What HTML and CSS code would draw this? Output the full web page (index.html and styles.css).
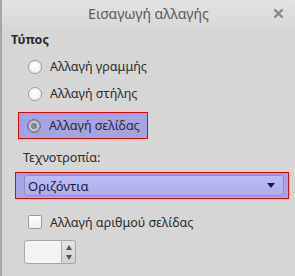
FILE: index.html
```html
<!DOCTYPE html>
<html>
<head>
<meta charset="utf-8">
<link rel="stylesheet" href="styles.css">
</head>
<body>
<div class="window">
  <div class="titlebar">
    <span></span>
    <span class="title">Εισαγωγή αλλαγής</span>
    <span class="close">
      <svg width="11" height="11" viewBox="0 0 11 11"><path d="M2 2 L9 9 M9 2 L2 9" stroke="#8a8a8a" stroke-width="2.4" stroke-linecap="round"/></svg>
    </span>
  </div>
  <div class="content">
    <div class="heading">Τύπος</div>
    <div class="options">
      <label class="row"><span class="radio"></span><span>Αλλαγή γραμμής</span></label>
      <label class="row"><span class="radio"></span><span>Αλλαγή στήλης</span></label>
      <label class="row selected"><span class="radio checked"></span><span>Αλλαγή σελίδας</span></label>
    </div>
    <div class="label">Τεχνοτροπία:</div>
    <div class="combo-frame">
      <div class="combo"><span>Οριζόντια</span><span class="arrow"></span></div>
    </div>
    <label class="row check-row"><span class="checkbox"></span><span>Αλλαγή αριθμού σελίδας</span></label>
    <div class="spin">
      <div class="spin-entry"></div>
      <div class="spin-buttons"><span class="up"></span><span class="down"></span></div>
    </div>
  </div>
</div>
</body>
</html>
```

FILE: styles.css
```css
html, body { margin: 0; padding: 0; }
body {
  font-family: "Noto Sans", "DejaVu Sans", sans-serif;
  font-size: 12.5px;
  color: #2c2c2c;
}
.window {
  width: 295px;
  height: 276px;
  box-sizing: border-box;
  background: #d6d6d6;
  border-left: 2px solid #a6a6a6;
  overflow: hidden;
}
.titlebar {
  height: 26px;
  display: grid;
  grid-template-columns: 1fr auto 1fr;
  align-items: center;
  background: linear-gradient(#e2e2e2, #d9d9d9);
}
.title {
  font-size: 14px;
  color: #5a5a5a;
  padding-top: 1px;
}
.close {
  justify-self: end;
  margin-right: 11px;
  display: flex;
}
.content {
  padding-left: 9px;
  display: flex;
  flex-direction: column;
}
.heading {
  font-weight: bold;
  margin-top: 5px;
  height: 18px;
  line-height: 18px;
}
.options {
  display: flex;
  flex-direction: column;
  margin-top: 4px;
}
.row {
  display: flex;
  align-items: center;
  gap: 8px;
  height: 27px;
  padding-left: 17px;
}
.row.selected {
  margin-left: 7px;
  padding-left: 8px;
  width: 120px;
  height: 25px;
  border: 1px solid #f00000;
  background: #a4a4e2;
  margin-top: 5px;
}
.radio {
  width: 12px;
  height: 12px;
  border: 1px solid #9c9c9c;
  border-radius: 50%;
  background: radial-gradient(circle at 50% 40%, #ffffff, #ececec);
  flex: none;
}
.radio.checked {
  border-color: #6a7480;
  background: radial-gradient(circle, #7d8894 0 3px, #c8ccd8 3.5px 4.5px, #9aa0b0 5px);
}
.label {
  margin-top: 10px;
  padding-left: 12px;
  height: 18px;
  line-height: 18px;
}
.combo-frame {
  margin-top: 5px;
  margin-left: 4px;
  width: 272px;
  height: 25px;
  border: 1px solid #f00000;
  background: #a6a6e6;
  box-sizing: content-box;
  display: flex;
  align-items: center;
}
.combo {
  margin-left: 8px;
  width: 260px;
  height: 21px;
  box-sizing: border-box;
  border: 1px solid #8f8fc6;
  border-radius: 3px;
  background: linear-gradient(#bcbcf4, #acacec);
  display: flex;
  align-items: center;
  justify-content: space-between;
  padding: 0 8px 0 3px;
  color: #1c1c44;
  font-size: 13px;
}
.arrow {
  width: 0;
  height: 0;
  border-left: 4.5px solid transparent;
  border-right: 4.5px solid transparent;
  border-top: 5px solid #1a1a3a;
}
.check-row {
  margin-top: 12px;
  padding-left: 17px;
  height: 22px;
}
.checkbox {
  width: 12px;
  height: 12px;
  border: 1px solid #9e9e9e;
  border-radius: 2px;
  background: linear-gradient(#ffffff, #eeeeee);
  flex: none;
}
.spin {
  display: flex;
  margin-left: 13px;
  margin-top: 7px;
  height: 24px;
}
.spin-entry {
  width: 38px;
  height: 24px;
  box-sizing: border-box;
  border: 1px solid #a8a8a8;
  border-radius: 3px 0 0 3px;
  background: #f3f3f3;
}
.spin-buttons {
  width: 14px;
  height: 24px;
  box-sizing: border-box;
  border: 1px solid #a8a8a8;
  border-left: none;
  border-radius: 0 3px 3px 0;
  background: linear-gradient(#e4e4e4, #d2d2d2);
  display: flex;
  flex-direction: column;
  align-items: center;
  justify-content: center;
  gap: 5px;
}
.up {
  width: 0; height: 0;
  border-left: 3px solid transparent;
  border-right: 3px solid transparent;
  border-bottom: 5px solid #555;
}
.down {
  width: 0; height: 0;
  border-left: 3px solid transparent;
  border-right: 3px solid transparent;
  border-top: 5px solid #555;
}
```
